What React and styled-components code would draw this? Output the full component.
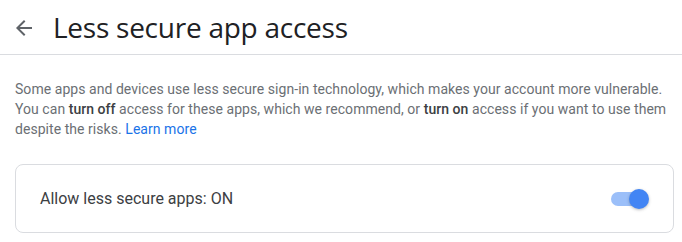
import React, { useState } from 'react';
import styled, { createGlobalStyle } from 'styled-components';

const GlobalStyle = createGlobalStyle`
	body {
		margin: 0;
		background: #fff;
		font-family: Roboto, "Liberation Sans", sans-serif;
	}
`

const Header = styled.header`
	display: flex;
	align-items: center;
	height: 54px;
	border-bottom: 1px solid #dadce0;
	padding-left: 12px;
`

const BackButton = styled.button`
	display: flex;
	align-items: center;
	justify-content: center;
	width: 24px;
	height: 24px;
	padding: 0;
	margin-right: 17px;
	margin-top: 2px;
	border: none;
	background: none;
	color: #5f6368;
	cursor: pointer;
`

const Title = styled.h1`
	margin: 0;
	font-family: "Open Sans", Roboto, sans-serif;
	font-weight: 400;
	font-size: 28px;
	letter-spacing: -0.25px;
	color: #202124;
`

const Content = styled.main`
	padding: 24px 8px 0 15px;
`

const Description = styled.p`
	margin: 0 0 25px 0;
	font-size: 14px;
	line-height: 20px;
	color: #6b6f74;
	letter-spacing: 0.05px;
`

const Strong = styled.b`
	font-weight: 500;
	color: #3c4043;
`

const LearnMore = styled.a`
	color: #1a73e8;
	text-decoration: none;
`

const Card = styled.div`
	display: flex;
	align-items: center;
	justify-content: space-between;
	height: 67px;
	padding: 0 24px;
	border: 1px solid #dadce0;
	border-radius: 8px;
`

const Label = styled.span`
	font-size: 16px;
	color: #3c4043;
`

const Switch = styled.button`
	position: relative;
	width: 38px;
	height: 20px;
	padding: 0;
	border: none;
	background: none;
	cursor: pointer;
`

const Track = styled.span`
	position: absolute;
	left: 0;
	top: 3px;
	width: 34px;
	height: 14px;
	border-radius: 7px;
	background: ${p => (p.$on ? '#8ab4f8' : '#bdc1c6')};
	opacity: ${p => (p.$on ? 0.85 : 1)};
`

const Knob = styled.span`
	position: absolute;
	top: 0;
	left: ${p => (p.$on ? '18px' : '0')};
	width: 20px;
	height: 20px;
	border-radius: 50%;
	background: ${p => (p.$on ? '#4285f4' : '#fff')};
	box-shadow: 0 1px 3px rgba(60, 64, 67, 0.35);
`

function ArrowBack() {
	return (
		<svg width="24" height="24" viewBox="0 0 24 24" fill="currentColor">
			<path d="M20 11H7.83l5.59-5.59L12 4l-8 8 8 8 1.41-1.41L7.83 13H20v-2z" />
		</svg>
	);
}

function App() {
	const [on, setOn] = useState(true);

	return (
		<>
			<GlobalStyle />
			<Header>
				<BackButton aria-label="Back"><ArrowBack /></BackButton>
				<Title>Less secure app access</Title>
			</Header>
			<Content>
				<Description>
					Some apps and devices use less secure sign-in technology, which makes your account more vulnerable.
					You can <Strong>turn off</Strong> access for these apps, which we recommend, or <Strong>turn on</Strong> access
					if you want to use them despite the risks. <LearnMore href="#">Learn more</LearnMore>
				</Description>
				<Card>
					<Label>Allow less secure apps: {on ? 'ON' : 'OFF'}</Label>
					<Switch role="switch" aria-checked={on} onClick={() => setOn(!on)}>
						<Track $on={on} />
						<Knob $on={on} />
					</Switch>
				</Card>
			</Content>
		</>
	);
}

export default App;
